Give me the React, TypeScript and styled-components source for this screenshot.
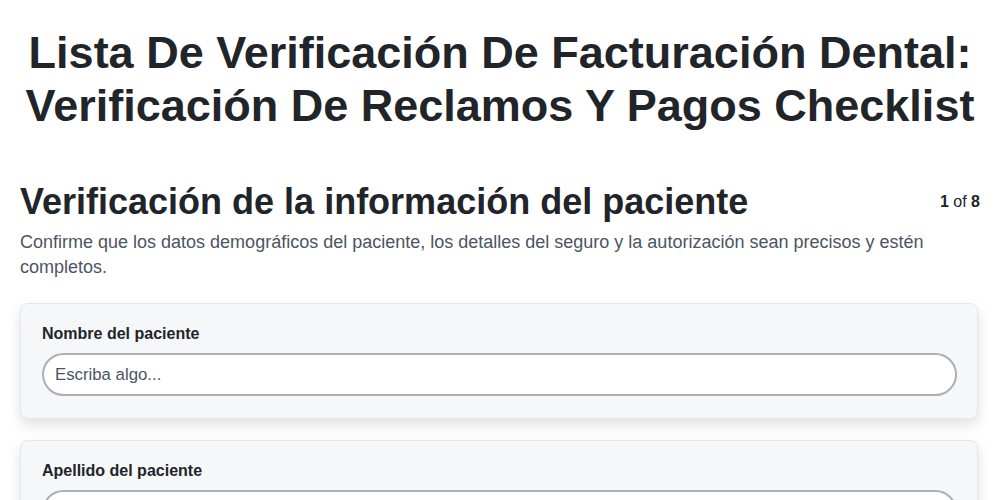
import React from "react";
import styled, { createGlobalStyle } from "styled-components";

const GlobalStyle = createGlobalStyle`
  body {
    margin: 0;
    background: #ffffff;
    font-family: "Liberation Sans", Arial, sans-serif;
    color: #212529;
  }
`;

const fields = ["Nombre del paciente", "Apellido del paciente", "Fecha de nacimiento"];

function App() {
  return (
    <>
      <GlobalStyle />
      <Page>
        <Title>
          Lista De Verificación De Facturación Dental: Verificación De Reclamos Y Pagos Checklist
        </Title>
        <SectionHeader>
          <SectionTitle>Verificación de la información del paciente</SectionTitle>
          <Counter>
            <b>1</b> of <b>8</b>
          </Counter>
        </SectionHeader>
        <Description>
          Confirme que los datos demográficos del paciente, los detalles del seguro y la
          autorización sean precisos y estén completos.
        </Description>
        <CardList>
          {fields.map((f) => (
            <Card key={f}>
              <Label>{f}</Label>
              <TextInput type="text" placeholder="Escriba algo..." />
            </Card>
          ))}
        </CardList>
      </Page>
    </>
  );
}

export default App;

const Page = styled.div`
  padding: 26px 20px 40px;
`;

const Title = styled.h1`
  margin: 0 0 48px;
  text-align: center;
  font-size: 45px;
  line-height: 53px;
  font-weight: 700;
  color: #212529;
`;

const SectionHeader = styled.div`
  display: flex;
  justify-content: space-between;
  align-items: center;
`;

const SectionTitle = styled.h2`
  margin: 0;
  font-size: 36px;
  line-height: 44px;
  font-weight: 700;
  color: #212529;
`;

const Counter = styled.div`
  font-size: 16px;
  color: #212529;
`;

const Description = styled.p`
  margin: 6px 0 23px;
  font-size: 18px;
  line-height: 25px;
  color: #4b5563;
`;

const CardList = styled.div`
  display: flex;
  flex-direction: column;
  gap: 21px;
`;

const Card = styled.div`
  background: #f6f7f9;
  border: 1px solid #e5e7eb;
  border-radius: 8px;
  padding: 20px 20px 22px 21px;
  box-shadow: 0 6px 14px rgba(0, 0, 0, 0.12);
  margin-right: 2px;
`;

const Label = styled.div`
  font-size: 16px;
  line-height: 20px;
  font-weight: 700;
  color: #212529;
  margin-bottom: 9px;
`;

const TextInput = styled.input`
  display: block;
  box-sizing: border-box;
  width: 100%;
  height: 43px;
  padding: 0 11px;
  border: 2px solid #a8b0ba;
  border-radius: 9999px;
  background: #ffffff;
  font-family: "Liberation Sans", Arial, sans-serif;
  font-size: 16.8px;
  color: #212529;
  outline: none;

  &::placeholder {
    color: #4b5563;
  }
`;
